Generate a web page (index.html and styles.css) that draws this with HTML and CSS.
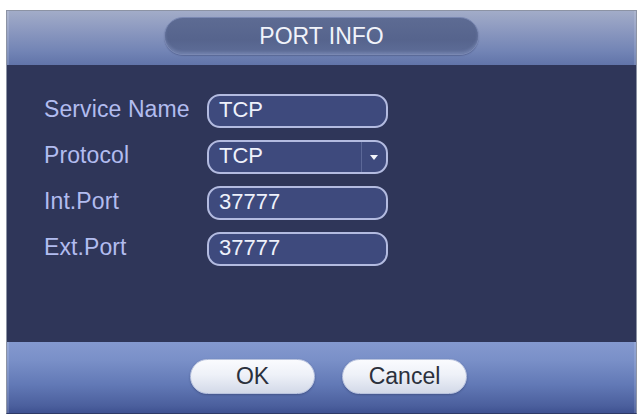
FILE: index.html
```html
<!DOCTYPE html>
<html>
<head>
<meta charset="utf-8">
<link rel="stylesheet" href="styles.css">
</head>
<body>
<div class="dialog">
  <div class="header">
    <div class="title">PORT INFO</div>
  </div>
  <div class="content">
    <div class="row">
      <div class="label">Service Name</div>
      <div class="field">TCP</div>
    </div>
    <div class="row">
      <div class="label">Protocol</div>
      <div class="field select"><span class="value">TCP</span><span class="arrow"><svg width="10" height="7" viewBox="0 0 10 7"><path d="M1 1 L9 1 L5 6 Z" fill="#f2f4fa"/></svg></span></div>
    </div>
    <div class="row">
      <div class="label">Int.Port</div>
      <div class="field">37777</div>
    </div>
    <div class="row">
      <div class="label">Ext.Port</div>
      <div class="field">37777</div>
    </div>
  </div>
  <div class="footer">
    <div class="btn">OK</div>
    <div class="btn">Cancel</div>
  </div>
</div>
</body>
</html>
```

FILE: styles.css
```css
html, body {
  margin: 0;
  padding: 0;
  background: #ffffff;
}
body {
  font-family: "Liberation Sans", Arial, sans-serif;
}
.dialog {
  margin: 10px 0 0 6px;
  width: 631px;
  height: 404px;
  box-sizing: border-box;
  border: 1px solid #8c93a4;
  border-bottom: 1px solid #2e3a66;
  display: flex;
  flex-direction: column;
  background: #2f3659;
}
.header {
  height: 54px;
  box-sizing: border-box;
  padding-top: 6px;
  display: flex;
  justify-content: center;
  align-items: flex-start;
  background: linear-gradient(to bottom, #a2acc8 0%, #8c99c0 35%, #7284b5 75%, #6174a9 100%);
  box-shadow: inset 2px 0 0 rgba(255,255,255,0.15), inset -2px 0 0 rgba(255,255,255,0.12);
}
.title {
  width: 315px;
  height: 38px;
  box-sizing: border-box;
  border-radius: 19px;
  background: linear-gradient(to bottom, #5d6b93 0%, #56648d 60%, #5e6d98 100%);
  border: 1px solid #7a88b2;
  box-shadow: inset 0 -2px 3px rgba(150,165,210,0.35), 0 1px 1px rgba(60,70,110,0.4);
  color: #f1f3fa;
  font-size: 23px;
  letter-spacing: 0;
  display: flex;
  align-items: center;
  justify-content: center;
  padding-top: 1px;
}
.content {
  height: 277px;
  box-sizing: border-box;
  padding: 29px 0 0 37px;
  display: flex;
  flex-direction: column;
  gap: 12px;
  background: #2f3659;
}
.row {
  display: flex;
  align-items: center;
  height: 34px;
}
.label {
  width: 163px;
  color: #b2bcef;
  font-size: 23px;
  letter-spacing: 0.1px;
  padding-bottom: 3px;
}
.field {
  width: 181px;
  height: 34px;
  box-sizing: border-box;
  border: 2px solid #b3bbe0;
  border-radius: 13px;
  background: #3e4a7d;
  color: #eef1fb;
  font-size: 22px;
  letter-spacing: 0;
  display: flex;
  align-items: center;
  padding-left: 10px;
  padding-bottom: 2px;
}
.select {
  padding-right: 0;
  justify-content: space-between;
}
.arrow {
  width: 24px;
  height: 30px;
  border-left: 1px solid #5c6898;
  display: flex;
  align-items: center;
  justify-content: center;
  margin-bottom: -2px;
}
.footer {
  flex: 1;
  display: flex;
  justify-content: center;
  align-items: flex-start;
  gap: 27px;
  padding-top: 17px;
  padding-left: 14px;
  box-sizing: border-box;
  background: linear-gradient(to bottom, #8499cf 0%, #7a90c8 25%, #6279b6 60%, #4b5f9d 90%, #3e5190 100%);
  box-shadow: inset 2px 0 0 rgba(255,255,255,0.15), inset -2px 0 0 rgba(255,255,255,0.12);
}
.btn {
  width: 125px;
  height: 35px;
  box-sizing: border-box;
  border-radius: 18px;
  background: linear-gradient(to bottom, #fafbfe 0%, #eef1f8 45%, #d3d9e8 100%);
  border: 1px solid #b9c3de;
  box-shadow: 0 1px 2px rgba(40,50,90,0.4);
  color: #2b303c;
  font-size: 23px;
  letter-spacing: 0;
  display: flex;
  align-items: center;
  justify-content: center;
  padding-bottom: 1px;
}
```
